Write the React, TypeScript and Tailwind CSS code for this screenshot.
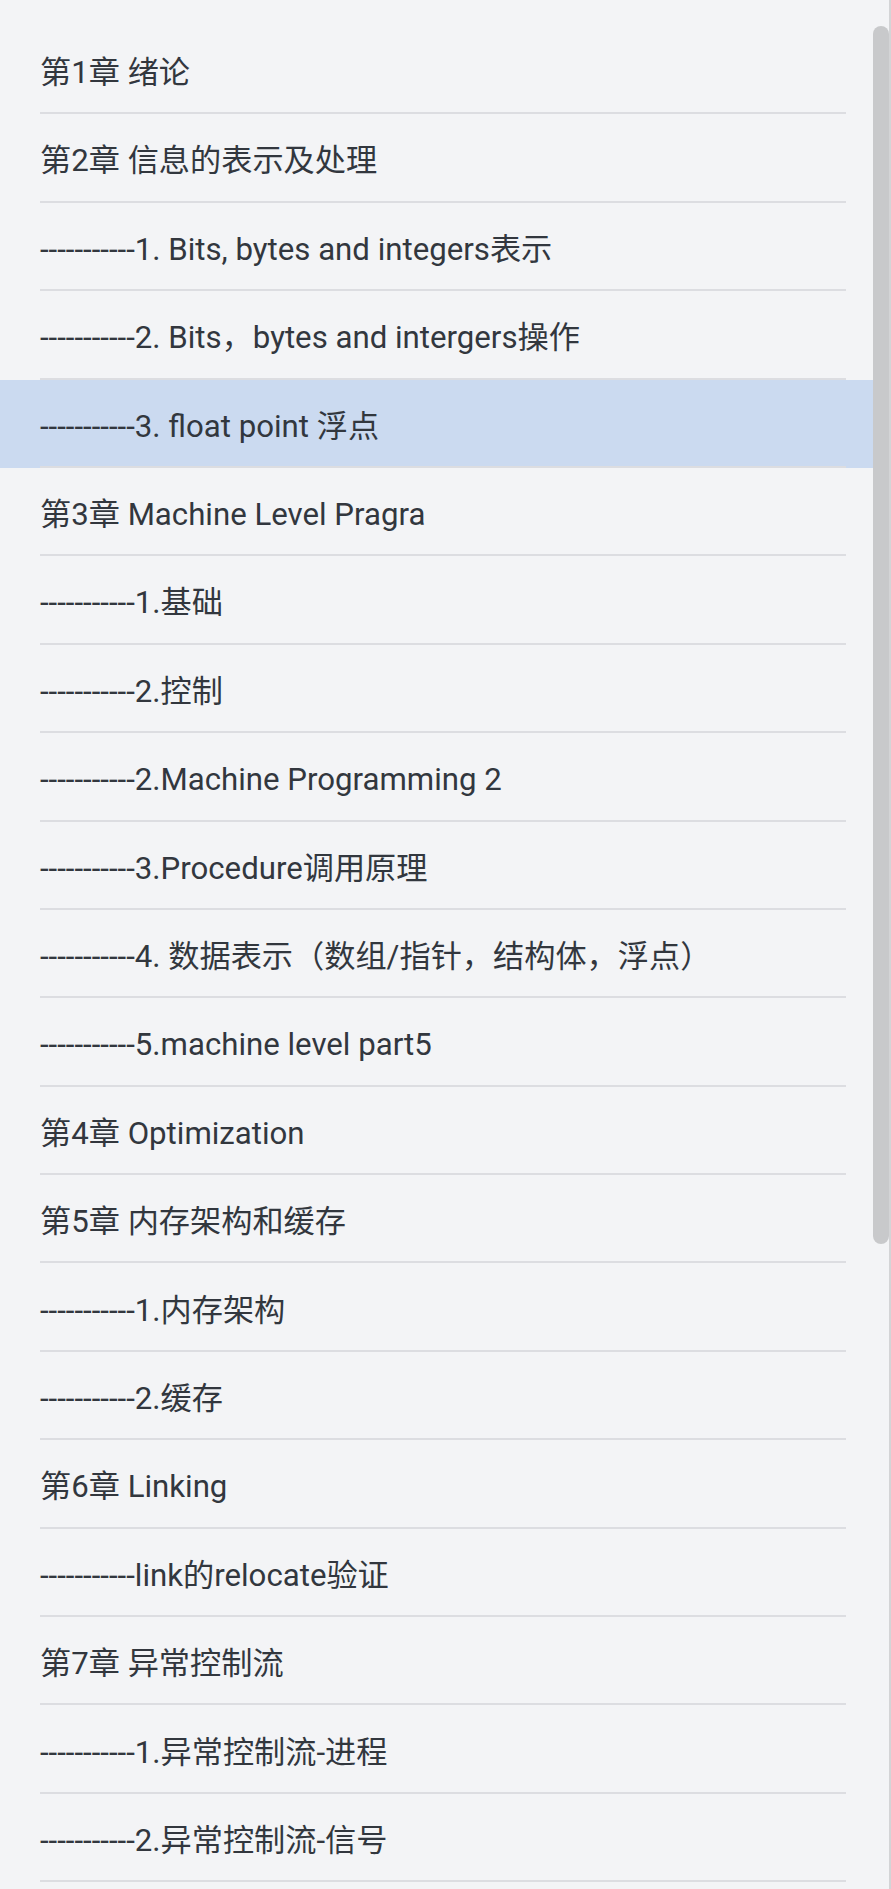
import React from "react";

// Table of contents for the course notes
const chapters: string[] = [
  "第1章 绪论",
  "第2章 信息的表示及处理",
  "-----------1. Bits, bytes and integers表示",
  "-----------2. Bits，bytes and intergers操作",
  "-----------3. float point 浮点",
  "第3章 Machine Level Pragra",
  "-----------1.基础",
  "-----------2.控制",
  "-----------2.Machine Programming 2",
  "-----------3.Procedure调用原理",
  "-----------4. 数据表示（数组/指针，结构体，浮点）",
  "-----------5.machine level part5",
  "第4章 Optimization",
  "第5章 内存架构和缓存",
  "-----------1.内存架构",
  "-----------2.缓存",
  "第6章 Linking",
  "-----------link的relocate验证",
  "第7章 异常控制流",
  "-----------1.异常控制流-进程",
  "-----------2.异常控制流-信号",
];

const ACTIVE = 4;

export default function App() {
  return (
    <div className="flex h-[1889px] w-[891px] overflow-hidden bg-[#f3f4f6] font-['Roboto','Noto_Sans_CJK_SC',sans-serif] text-[#32373e]">
      {/* List */}
      <ul className="flex-1 pt-[26px]">
        {chapters.map((title, i) => (
          <li
            key={i}
            className={`h-[88.4px] cursor-pointer ${i === ACTIVE ? "bg-[#cbdaf0]" : ""}`}
          >
            <div className="ml-[40px] mr-[27px] flex h-full items-center border-b-2 border-[#dcdde1] pt-[7px] text-[31.2px] leading-none whitespace-nowrap">
              {title}
            </div>
          </li>
        ))}
      </ul>

      {/* Scrollbar */}
      <div className="flex w-[18px] shrink-0 border-r-2 border-[#d3d4d6] pt-[26px]">
        <div className="h-[1218px] w-[16px] rounded-full bg-[#c8c9cb]" />
      </div>
    </div>
  );
}
